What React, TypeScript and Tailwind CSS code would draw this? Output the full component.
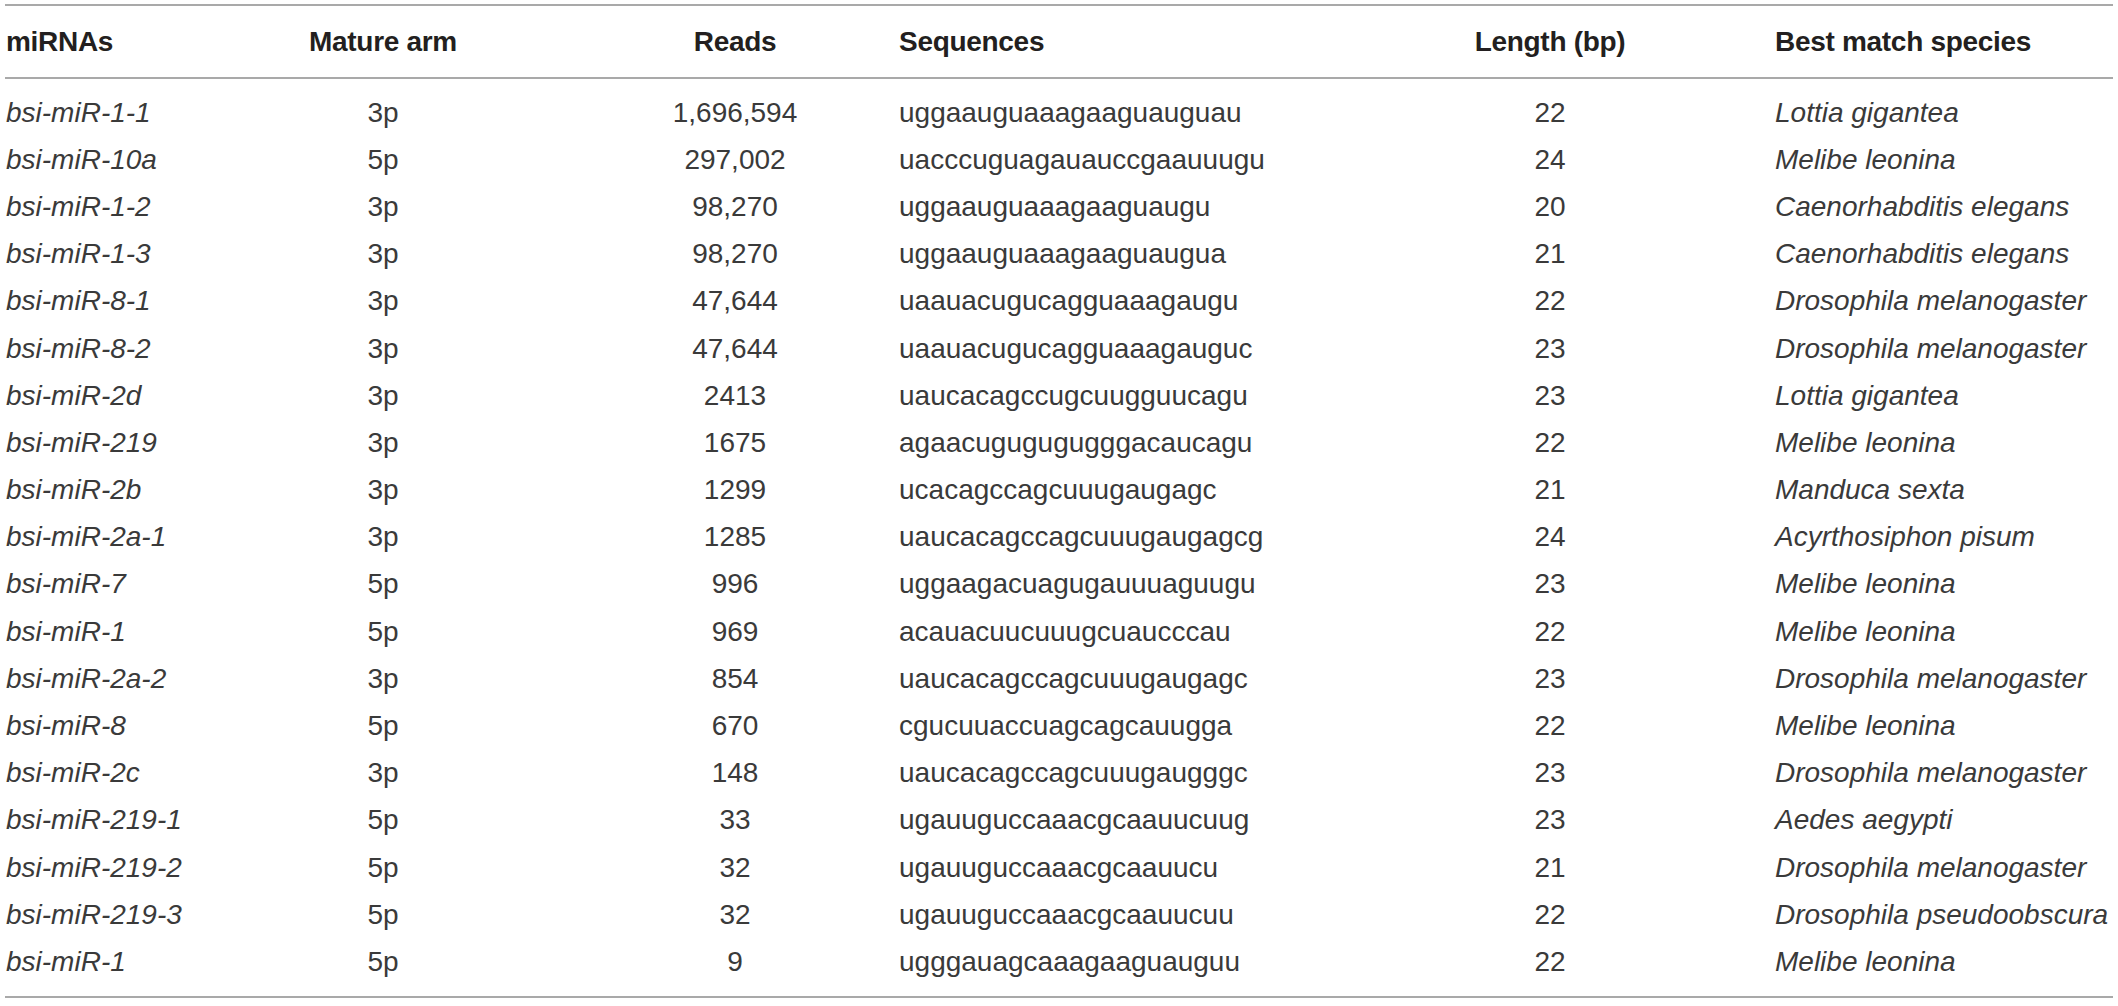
const rows: [string, string, string, string, string, string][] = [
  ['bsi-miR-1-1', '3p', '1,696,594', 'uggaauguaaagaaguauguau', '22', 'Lottia gigantea'],
  ['bsi-miR-10a', '5p', '297,002', 'uacccuguagauauccgaauuugu', '24', 'Melibe leonina'],
  ['bsi-miR-1-2', '3p', '98,270', 'uggaauguaaagaaguaugu', '20', 'Caenorhabditis elegans'],
  ['bsi-miR-1-3', '3p', '98,270', 'uggaauguaaagaaguaugua', '21', 'Caenorhabditis elegans'],
  ['bsi-miR-8-1', '3p', '47,644', 'uaauacugucagguaaagaugu', '22', 'Drosophila melanogaster'],
  ['bsi-miR-8-2', '3p', '47,644', 'uaauacugucagguaaagauguc', '23', 'Drosophila melanogaster'],
  ['bsi-miR-2d', '3p', '2413', 'uaucacagccugcuugguucagu', '23', 'Lottia gigantea'],
  ['bsi-miR-219', '3p', '1675', 'agaacugugugugggacaucagu', '22', 'Melibe leonina'],
  ['bsi-miR-2b', '3p', '1299', 'ucacagccagcuuugaugagc', '21', 'Manduca sexta'],
  ['bsi-miR-2a-1', '3p', '1285', 'uaucacagccagcuuugaugagcg', '24', 'Acyrthosiphon pisum'],
  ['bsi-miR-7', '5p', '996', 'uggaagacuagugauuuaguugu', '23', 'Melibe leonina'],
  ['bsi-miR-1', '5p', '969', 'acauacuucuuugcuaucccau', '22', 'Melibe leonina'],
  ['bsi-miR-2a-2', '3p', '854', 'uaucacagccagcuuugaugagc', '23', 'Drosophila melanogaster'],
  ['bsi-miR-8', '5p', '670', 'cgucuuaccuagcagcauugga', '22', 'Melibe leonina'],
  ['bsi-miR-2c', '3p', '148', 'uaucacagccagcuuugaugggc', '23', 'Drosophila melanogaster'],
  ['bsi-miR-219-1', '5p', '33', 'ugauuguccaaacgcaauucuug', '23', 'Aedes aegypti'],
  ['bsi-miR-219-2', '5p', '32', 'ugauuguccaaacgcaauucu', '21', 'Drosophila melanogaster'],
  ['bsi-miR-219-3', '5p', '32', 'ugauuguccaaacgcaauucuu', '22', 'Drosophila pseudoobscura'],
  ['bsi-miR-1', '5p', '9', 'ugggauagcaaagaaguauguu', '22', 'Melibe leonina'],
];

// column edges: 5 | 283 | 483 | 899 | 1325 | 1775 | 2111
const grid = 'grid grid-cols-[278px_200px_416px_426px_450px_1fr] items-center whitespace-nowrap';

export default function App() {
  return (
    <div className="w-[2118px] h-[1006px] bg-white pt-[4px] px-[5px] font-['Liberation_Sans',Arial,sans-serif] text-[28px]">
      <div className="border-t-2 border-[#a9a9a9]">
        <div className={`${grid} h-[71px] font-bold text-[#231f20] tracking-[-0.3px]`}>
          <div className="pl-[1px]">miRNAs</div>
          <div className="text-center">Mature arm</div>
          <div className="text-center pl-[88px]">Reads</div>
          <div>Sequences</div>
          <div className="text-center">Length (bp)</div>
          <div>Best match species</div>
        </div>
        <div className="border-t-2 border-[#a9a9a9] border-b-2 py-[10px] text-[#3a3a3a]">
          {rows.map((r, i) => (
            <div key={i} className={`${grid} h-[47.2px] leading-none`}>
              <div className="pl-[1px] italic">{r[0]}</div>
              <div className="text-center">{r[1]}</div>
              <div className="text-center pl-[88px]">{r[2]}</div>
              <div>{r[3]}</div>
              <div className="text-center">{r[4]}</div>
              <div className="italic">{r[5]}</div>
            </div>
          ))}
        </div>
      </div>
    </div>
  );
}
